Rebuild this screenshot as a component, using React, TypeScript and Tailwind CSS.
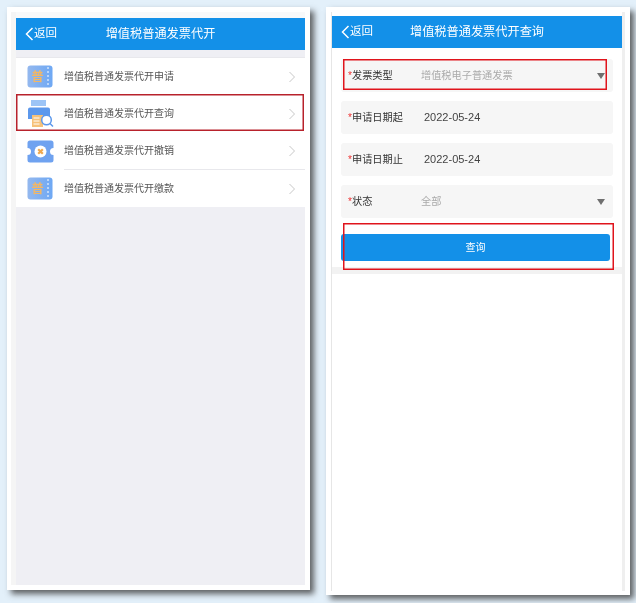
const font = "font-['Liberation_Sans','Noto_Sans_CJK_SC',sans-serif]";

function TicketIcon({ id }: { id: string }) {
  return (
    <svg width="26" height="23" viewBox="0 0 26 23">
      <defs>
        <linearGradient id={id} x1="0" y1="0" x2="1" y2="0">
          <stop offset="0" stopColor="#94b8ee" />
          <stop offset="1" stopColor="#6ea8f4" />
        </linearGradient>
      </defs>
      <rect x="0.5" y="0.5" width="25" height="22" rx="3" fill={`url(#${id})`} />
      <path d="M21 2v19" stroke="#fff" strokeWidth="1" strokeDasharray="2 2" />
      <text x="10.5" y="15.5" textAnchor="middle" fontSize="12" fontWeight="700" fill="#f2b766" fontFamily="'Noto Sans CJK SC',sans-serif">普</text>
    </svg>
  );
}

function PrinterIcon() {
  return (
    <svg width="27" height="28" viewBox="0 0 27 28">
      <rect x="4" y="0" width="15" height="6" fill="#9cc4f6" />
      <path d="M3 7.5h18a2 2 0 0 1 2 2V19H1V9.5a2 2 0 0 1 2-2z" fill="#5c98ec" />
      <rect x="5" y="15" width="11" height="12" fill="#f6c27a" />
      <path d="M6.5 18h6M6.5 21h6M6.5 24h6" stroke="#fff" strokeWidth="1" />
      <circle cx="19.5" cy="20" r="4.8" fill="#fff" stroke="#5c98ec" strokeWidth="1.5" />
      <path d="M23 23.5l3 3" stroke="#5c98ec" strokeWidth="1.5" />
    </svg>
  );
}

function CancelIcon() {
  return (
    <svg width="27" height="23" viewBox="0 0 27 23">
      <path d="M3 0.5h21a2.5 2.5 0 0 1 2.5 2.5v5a3.5 3.5 0 0 0 0 7v5a2.5 2.5 0 0 1-2.5 2.5H3A2.5 2.5 0 0 1 .5 20v-5a3.5 3.5 0 0 0 0-7V3A2.5 2.5 0 0 1 3 .5z" fill="#6fa2f0" />
      <circle cx="13.5" cy="11.5" r="6" fill="#fff" />
      <path d="M11.2 9.2l4.6 4.6M15.8 9.2l-4.6 4.6" stroke="#f0a84e" strokeWidth="2.2" />
    </svg>
  );
}

function Chevron() {
  return (
    <svg width="8" height="12" viewBox="0 0 8 12" fill="none">
      <path d="M1.5 1l5 5-5 5" stroke="#c8c8c8" strokeWidth="1" />
    </svg>
  );
}

function Caret() {
  return (
    <svg width="8" height="6" viewBox="0 0 8 6">
      <path d="M0 0h8L4 6z" fill="#6f6f6f" />
    </svg>
  );
}

function Header({ title }: { title: string }) {
  return (
    <div className="relative flex h-[32px] shrink-0 items-center justify-center bg-[#1390e8] text-white">
      <div className="absolute left-[9px] top-0 flex h-full items-center">
        <svg width="9" height="14" viewBox="0 0 9 14" fill="none">
          <path d="M7.5 1L1.5 7l6 6" stroke="#fff" strokeWidth="1.5" />
        </svg>
        <span className="text-[11.5px] leading-none">返回</span>
      </div>
      <span className="text-[12.2px] leading-none">{title}</span>
    </div>
  );
}

function Row({ icon, label, border, tall }: { icon: React.ReactNode; label: string; border?: boolean; tall?: boolean }) {
  return (
    <div className={`flex items-center ${tall ? "h-[38px]" : "h-[37px]"}`}>
      <div className="flex w-[48px] shrink-0 justify-center">{icon}</div>
      <div className={`flex h-full flex-1 items-center pr-[9px] ${border ? "border-b border-[#e8e8ec]" : ""}`}>
        <span className="flex-1 text-[10px] text-[#555]">{label}</span>
        <Chevron />
      </div>
    </div>
  );
}

function Field({ label, value, select }: { label: string; value: string; select?: boolean }) {
  return (
    <div className="flex h-[33px] items-center rounded-[3px] bg-[#f6f6f6] pl-[7px] pr-[8px]">
      <span className="w-[73px] shrink-0 text-[10.2px] text-[#333]">
        <span className="text-[#e33]">*</span>
        {label}
      </span>
      {select ? (
        <span className="flex-1 text-[10.2px] text-[#aaa]">{value}</span>
      ) : (
        <span className="flex-1 pl-[3px] text-[11px] text-[#444]">{value}</span>
      )}
      {select && <Caret />}
    </div>
  );
}

export default function App() {
  return (
    <div className={`${font} flex h-[603px] w-[636px] items-start overflow-hidden bg-[#e3f0fa] pl-[7px] pt-[7px] blur-[0.3px]`}>
      <div className="flex h-[583px] w-[303px] shrink-0 flex-col bg-white pb-[5px] pl-[4px] pr-[5px] pt-[5px] shadow-[4px_4px_6px_rgba(60,60,60,0.8)]">
        <div className="flex flex-1 flex-col border-l-[5px] border-[#f5f5f5] bg-[#f8f9fa] pt-[6px]">
          <Header title="增值税普通发票代开" />
          <div className="flex-1 bg-[#efeff4] pt-[7px]">
            <div className="flex flex-col border-t border-[#e8e8ec] bg-white">
              <Row icon={<TicketIcon id="t1" />} label="增值税普通发票代开申请" />
              <div className="relative">
                <Row icon={<PrinterIcon />} label="增值税普通发票代开查询" />
                <div className="absolute -top-[1px] left-0 right-[1px] h-[37px] ring-[1.5px] ring-inset ring-[#b8222c]" />
              </div>
              <Row icon={<CancelIcon />} label="增值税普通发票代开撤销" border tall />
              <Row icon={<TicketIcon id="t2" />} label="增值税普通发票代开缴款" />
            </div>
          </div>
        </div>
      </div>
      <div className="ml-[16px] flex h-[588px] w-[304px] shrink-0 flex-col bg-white pb-[4px] pl-[5px] pr-[5px] pt-[5px] shadow-[4px_4px_6px_rgba(60,60,60,0.8)]">
        <div className="flex flex-1 flex-col border-l border-r-[3px] border-l-[#e6e6e6] border-r-[#efefef] pt-[4px]">
          <Header title="增值税普通发票代开查询" />
          <div className="flex flex-col gap-[9px] px-[9px] pt-[11px]">
            <div className="relative">
              <Field label="发票类型" value="增值税电子普通发票" select />
              <div className="absolute left-[2px] top-0 h-[31px] w-[264px] ring-[1.5px] ring-inset ring-[#e0141c]" />
            </div>
            <Field label="申请日期起" value="2022-05-24" />
            <Field label="申请日期止" value="2022-05-24" />
            <Field label="状态" value="全部" select />
          </div>
          <div className="mt-[7px] h-[49px] bg-[linear-gradient(#fff_42px,#f2f2f2_42px)] px-[9px] pt-[9px]">
            <div className="relative h-[27px] w-[269px]">
              <div className="flex h-full items-center justify-center rounded-[3px] bg-[#1390e8] text-[10px] text-white">查询</div>
              <div className="absolute -top-[11px] left-[2px] h-[47px] w-[271px] ring-[1.5px] ring-inset ring-[#e0141c]" />
            </div>
          </div>
        </div>
      </div>
    </div>
  );
}
